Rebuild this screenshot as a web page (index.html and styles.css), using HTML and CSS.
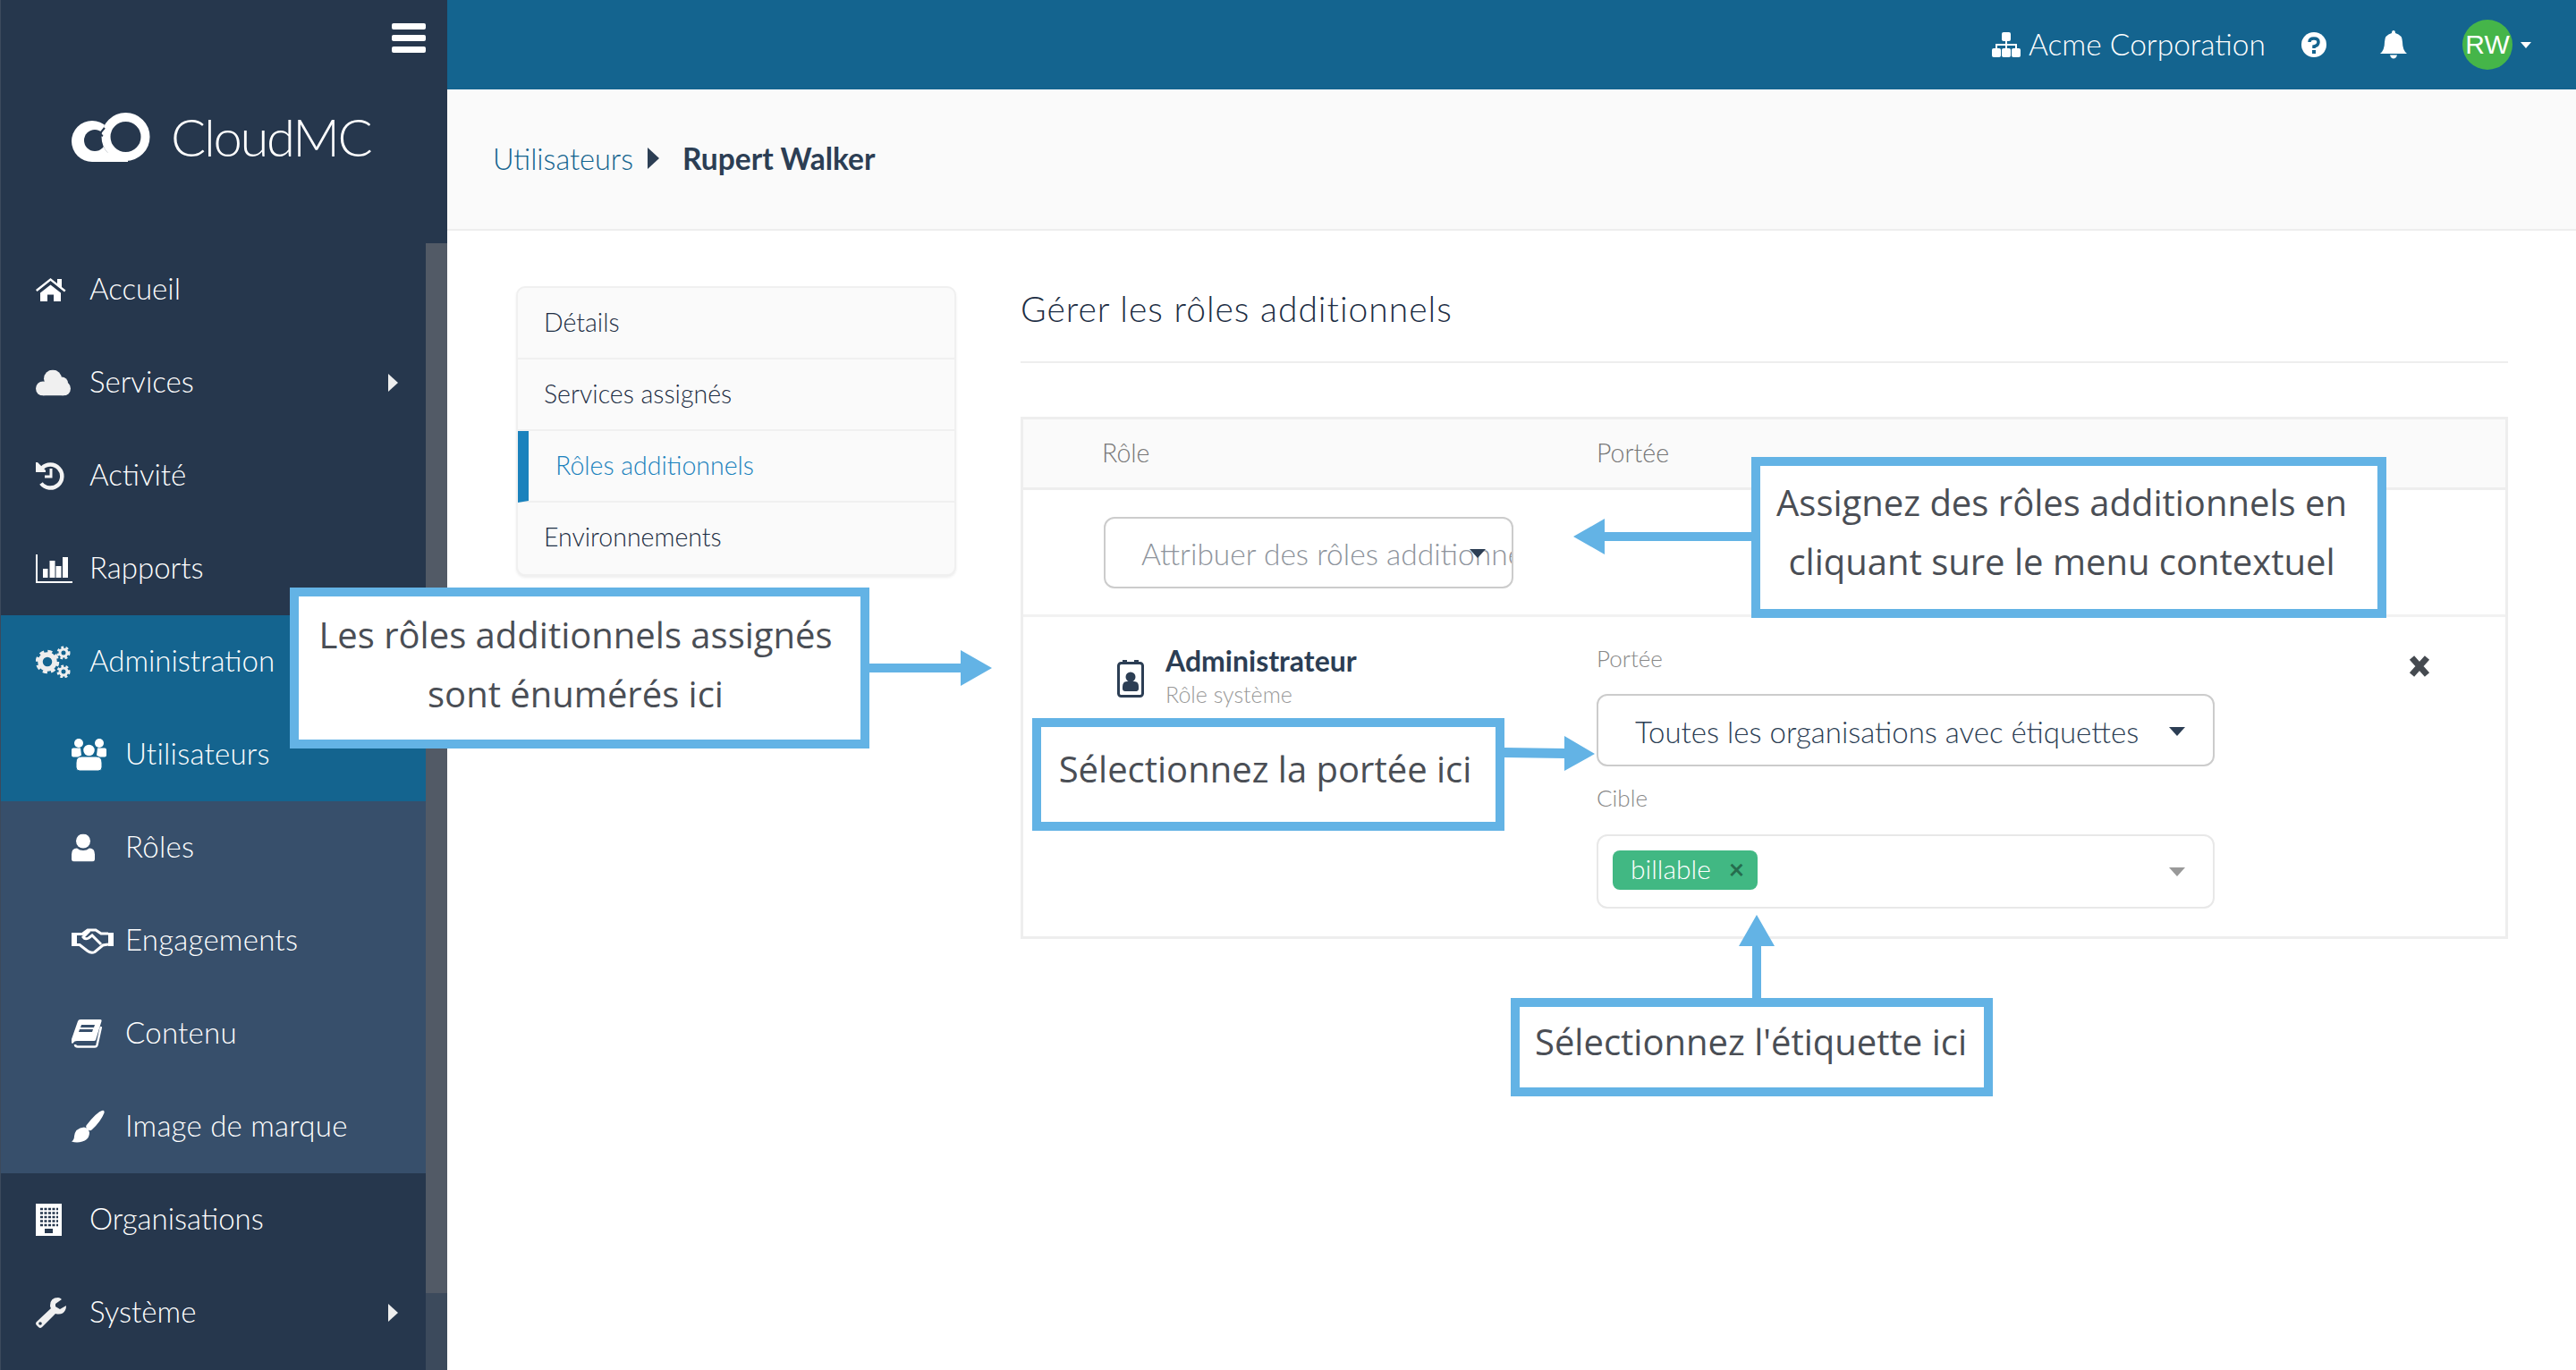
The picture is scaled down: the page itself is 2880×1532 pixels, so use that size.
FILE: index.html
```html
<!DOCTYPE html>
<html lang="fr">
<head>
    <meta charset="UTF-8">
    <title>CloudMC - Rôles additionnels</title>
    <link rel="stylesheet" href="styles.css">
</head>
<body>
    <div class="app">
        <aside class="sidebar">
            <div class="sidebar-top">
                <div class="burger"><span></span><span></span><span></span></div>
                <div class="logo">
                    <svg class="logo-mark" width="88" height="56" viewBox="0 0 88 56">
                        <circle cx="23" cy="32" r="23" fill="#fff"/>
                        <rect x="23" y="40" width="40" height="15" fill="#fff"/>
                        <circle cx="26" cy="31" r="12" fill="#26374d"/>
                        <circle cx="60" cy="27" r="26.500" fill="#26374d"/>
                        <circle cx="60.500" cy="27" r="22" fill="none" stroke="#fff" stroke-width="10"/>
                        <path d="M37 17l-6 7 4 2" fill="none" stroke="#26374d" stroke-width="2"/>
                        <rect x="23" y="45" width="38" height="10" fill="#fff"/>
                    </svg>
                    <span class="logo-text">CloudMC</span>
                </div>
            </div>
            <nav class="nav">
                <a class="nav-item">
                    <svg class="nav-icon" width="34" height="27" viewBox="0 0 34 27"><path fill="#fff" d="M0 13.500L16.500 0.500 24 6.500V1.500h5v9l4.500 3.500-1.500 2L16.500 3.500 1.500 15.500z"/><path fill="#fff" d="M5 17L16.500 8 28 17v9.500h-8V19h-7v7.500H5z"/></svg>
                    <span>Accueil</span>
                </a>
                <a class="nav-item">
                    <svg class="nav-icon" width="39" height="29" viewBox="0 0 39 29"><g fill="#f0f0f0"><circle cx="19" cy="10" r="10"/><circle cx="29" cy="15" r="7"/><circle cx="8" cy="21" r="8"/><circle cx="31" cy="21" r="8"/><rect x="8" y="14" width="23" height="15"/></g></svg>
                    <span>Services</span>
                    <i class="nav-arrow"></i>
                </a>
                <a class="nav-item">
                    <svg class="nav-icon" width="32" height="32" viewBox="0 0 32 32"><path fill="none" stroke="#f4f4f4" stroke-width="4.500" d="M7 7.500A13 13 0 1 1 6 24.500"/><path fill="#f4f4f4" d="M0 1h2l9 9v2H0z"/><path fill="none" stroke="#f4f4f4" stroke-width="3" d="M17 8v9h-7"/></svg>
                    <span>Activité</span>
                </a>
                <a class="nav-item">
                    <svg class="nav-icon" width="41" height="32" viewBox="0 0 41 32"><path fill="none" stroke="#fff" stroke-width="2" d="M1 0v31h40"/><path fill="#fff" d="M8 16h5.500v10H8zM15.500 7h6v19h-6zM22.500 13h6v13h-6zM30 3h6v23h-6z"/></svg>
                    <span>Rapports</span>
                </a>
                <a class="nav-item nav-item-open">
                    <svg class="nav-icon" width="39" height="36" viewBox="0 0 39 36"><g fill="none" stroke="#eee"><circle cx="13" cy="18" r="8" stroke-width="5.500"/><circle cx="13" cy="18" r="11.500" stroke-width="3.500" stroke-dasharray="5 4.030"/><circle cx="31" cy="8" r="4" stroke-width="3"/><circle cx="31" cy="8" r="6" stroke-width="3" stroke-dasharray="2.700 2.300"/><circle cx="31" cy="29" r="4" stroke-width="3"/><circle cx="31" cy="29" r="6" stroke-width="3" stroke-dasharray="2.700 2.300"/></g></svg>
                    <span>Administration</span>
                </a>
                <a class="nav-item nav-sub nav-item-open">
                    <svg class="nav-icon" width="39" height="36" viewBox="0 0 39 36"><g fill="#fff"><circle cx="8" cy="5" r="5"/><circle cx="31" cy="5" r="5"/><path d="M0 12.500q0-2 2-2h8l1 8-3 2H2q-2 0-2-2zM39 12.500q0-2-2-2h-8l-1 8 3 2h6q2 0 2-2z"/><circle cx="19.500" cy="13" r="7" stroke="#14648f" stroke-width="1.500"/><path d="M5 27q0-7 6-7h17q6 0 6 7v5q0 4-4 4H9q-4 0-4-4z" stroke="#14648f" stroke-width="1"/></g></svg>
                    <span>Utilisateurs</span>
                </a>
                <a class="nav-item nav-sub">
                    <svg class="nav-icon" width="26" height="31" viewBox="0 0 26 31"><g fill="#fff"><circle cx="13" cy="8" r="8"/><path d="M0 23q0-7 6-7 3 2.500 7 2.500t7-2.500q6 0 6 7v5q0 3-3 3H3q-3 0-3-3z"/></g></svg>
                    <span>Rôles</span>
                </a>
                <a class="nav-item nav-sub">
                    <svg class="nav-icon" width="47" height="30" viewBox="0 0 47 30"><path fill="#fff" d="M0 6h6v15H0zM41 6h6v15h-6z"/><path fill="none" stroke="#fff" stroke-width="3" d="M6 7.500h6L18 3h9l6 4h8M6 19.500h3l9 7q4 3 8 1l9-7.500 6-1M20 4l-7 7q2 3 6 1l4-3 10 10"/></svg>
                    <span>Engagements</span>
                </a>
                <a class="nav-item nav-sub">
                    <svg class="nav-icon" width="34" height="32" viewBox="0 0 34 32"><path fill="#fff" d="M10 0h22q2 0 1.500 2L27 23q-.5 1-2 1H6q-3 0-4 2l-1 1q-2-1-1-5L7 2q.5-2 3-2z"/><path fill="#374f6b" d="M11 6h15l-1 3H10zM9 11h15l-1 3H8z"/><path fill="none" stroke="#fff" stroke-width="2.500" d="M4 28q0 2.500 3 2.500h19q2 0 2.500-2L33 8"/></svg>
                    <span>Contenu</span>
                </a>
                <a class="nav-item nav-sub">
                    <svg class="nav-icon" width="37" height="37" viewBox="0 0 37 37"><path fill="#fff" d="M35 0q2 0 1.500 3-4 10-14 19-2 2-5-1-2-2-1-4Q28 2 35 0zM14 19q5 1 6 6 0 8-8 10-6 2-12 0 3-2 3-6 1-9 11-10z"/></svg>
                    <span>Image de marque</span>
                </a>
                <a class="nav-item">
                    <svg class="nav-icon" width="29" height="36" viewBox="0 0 29 36"><rect width="29" height="36" fill="#fff"/><path fill="none" stroke="#26374d" stroke-width="2.600" stroke-dasharray="3 1.500" d="M5 6h20M5 10.500h20M5 15h20M5 19.500h20M5 24h20"/><rect x="10" y="28" width="9" height="5" fill="#26374d"/></svg>
                    <span>Organisations</span>
                </a>
                <a class="nav-item">
                    <svg class="nav-icon" width="34" height="34" viewBox="0 0 34 34"><path fill="#f0f0f0" d="M25 0q-9 0-9 9 0 2 1 3L1 27q-2 2 0 4l2 2q2 2 4 0l15-15q8 2 11-4 1-2 1-5l-7 4-5-3V7l7-5q-2-2-4-2z"/><circle cx="5" cy="29" r="1.800" fill="#26374d"/></svg>
                    <span>Système</span>
                    <i class="nav-arrow"></i>
                </a>
            </nav>
            <div class="scrollbar"></div>
        </aside>

        <div class="main">
            <header class="topbar">
                <div class="org">
                    <svg width="32" height="28" viewBox="0 0 32 28"><g fill="#fff"><rect x="11" y="0" width="10" height="10" rx="2"/><rect x="0" y="18" width="10" height="10" rx="2"/><rect x="11" y="18" width="10" height="10" rx="2"/><rect x="22" y="18" width="10" height="10" rx="2"/></g><path fill="none" stroke="#fff" stroke-width="2" d="M16 10v8M5 18v-4h22v4"/></svg>
                    <span>Acme Corporation</span>
                </div>
                <svg class="top-icon" width="28" height="28" viewBox="0 0 28 28"><circle cx="14" cy="14" r="14" fill="#fff"/><path fill="none" stroke="#14648f" stroke-width="3.500" d="M9 11q0-4 5-4t5 4-5 5v2"/><rect x="12" y="20" width="4" height="4" fill="#14648f"/></svg>
                <svg class="top-icon bell" width="30" height="32" viewBox="0 0 30 32"><path fill="#fff" d="M15 0q2 0 2 3 8 2 8 10 0 9 5 13H0q5-4 5-13 0-8 8-10 0-3 2-3zM11 27.500h8q-1 4-4 4t-4-4z"/></svg>
                <div class="avatar">RW</div>
                <i class="avatar-caret"></i>
            </header>

            <div class="crumbs">
                <a>Utilisateurs</a>
                <i class="crumb-arrow"></i>
                <strong>Rupert Walker</strong>
            </div>

            <div class="content">
                <ul class="side-tabs">
                    <li>Détails</li>
                    <li>Services assignés</li>
                    <li class="active">Rôles additionnels</li>
                    <li>Environnements</li>
                </ul>

                <section class="panel">
                    <h2>Gérer les rôles additionnels</h2>
                    <div class="roles">
                        <div class="roles-head">
                            <span>Rôle</span>
                            <span>Portée</span>
                        </div>
                        <div class="roles-add">
                            <div class="add-select">
                                <span>Attribuer des rôles additionnels</span>
                                <i class="caret"></i>
                            </div>
                        </div>
                        <div class="role-row">
                            <div class="role-name">
                                <svg width="30" height="42" viewBox="0 0 30 42"><rect x="1.500" y="3.500" width="27" height="37" rx="3" fill="none" stroke="#2c3e54" stroke-width="3"/><path fill="#2c3e54" d="M6 0h5v4H6zM19 0h5v4h-5z"/><circle cx="15" cy="19" r="5.500" fill="#2c3e54"/><path fill="#2c3e54" d="M6 30q0-6 5-6h8q5 0 5 6v2q0 3-3 3H9q-3 0-3-3z"/></svg>
                                <div>
                                    <div class="role-title">Administrateur</div>
                                    <div class="role-sub">Rôle système</div>
                                </div>
                            </div>
                            <div class="role-fields">
                                <label>Portée</label>
                                <div class="scope-select">
                                    <span>Toutes les organisations avec étiquettes</span>
                                    <i class="caret"></i>
                                </div>
                                <label class="target-label">Cible</label>
                                <div class="target-select">
                                    <span class="tag">billable<b>×</b></span>
                                    <i class="caret caret-grey"></i>
                                </div>
                            </div>
                            <svg class="remove" width="24" height="26" viewBox="0 0 24 26"><path fill="none" stroke="#454a50" stroke-width="7" d="M3.500 3.500l17 19M20.500 3.500l-17 19"/></svg>
                        </div>
                    </div>
                </section>
            </div>
        </div>
    </div>

    <svg class="arrows" width="2880" height="1532" viewBox="0 0 2880 1532">
        <path d="M972 742h102v-15l35 20-35 20v-15H972z"/>
        <path d="M1958 595h-164v-15l-35 20 35 20v-15h164z"/>
        <path d="M1682 836l67 1v-14l34 20-34 19v-14l-67-1z"/>
        <path d="M1959 1116v-58h-15l20-35 20 35h-15v58z"/>
    </svg>

    <div class="callout callout-listed">Les rôles additionnels assignés<br>sont énumérés ici</div>
    <div class="callout callout-assign">Assignez des rôles additionnels en<br>cliquant sure le menu contextuel</div>
    <div class="callout callout-scope">Sélectionnez la portée ici</div>
    <div class="callout callout-tag">Sélectionnez l'étiquette ici</div>
</body>
</html>
```

FILE: styles.css
```css
* {
    margin: 0;
    padding: 0;
    box-sizing: border-box;
}

body {
    margin: 0;
    width: 2880px;
    height: 1532px;
    overflow: hidden;
    position: relative;
    background-color: white;
    font-family: Lato, "Open Sans", sans-serif;
    color: #2c3e54;
}

.app {
    display: flex;
    height: 100%;
}

/* sidebar */
.sidebar {
    position: relative;
    flex: 0 0 500px;
    background-color: #26374d;
    border-left: 1px solid #3c4a5c;
    color: white;
}

.sidebar-top {
    height: 272px;
    position: relative;
}

.burger {
    position: absolute;
    top: 26px;
    right: 24px;
    width: 38px;
    display: flex;
    flex-direction: column;
    gap: 6px;
}

.burger span {
    height: 7px;
    border-radius: 2px;
    background-color: white;
}

.logo {
    display: flex;
    align-items: center;
    gap: 23px;
    padding: 126px 0 0 79px;
}

.logo-text {
    font-size: 58px;
    line-height: 54px;
    font-weight: 300;
    letter-spacing: -2.300px;
    padding-bottom: 2px;
}

.nav {
    width: 475px;
}

.nav-item {
    height: 104px;
    display: flex;
    align-items: center;
    position: relative;
    padding-left: 99px;
    padding-bottom: 5px;
    font-size: 33px;
    font-weight: 300;
}

.nav-icon {
    position: absolute;
    left: 39px;
    top: 50%;
    transform: translateY(-50%);
}

.nav-sub {
    background-color: #374f6b;
    padding-left: 139px;
    letter-spacing: 0.250px;
}

.nav-sub .nav-icon {
    left: 79px;
}

.nav-item-open {
    background-color: #14648f;
}

.nav-arrow {
    position: absolute;
    left: 433px;
    top: 50%;
    margin-top: -10px;
    border-left: 11px solid #eee;
    border-top: 10px solid transparent;
    border-bottom: 10px solid transparent;
}

.scrollbar {
    position: absolute;
    top: 272px;
    right: 0;
    width: 24px;
    bottom: 0;
    background: linear-gradient(#525a66 1174px, #3c4a5c 1174px);
}

/* top bar */
.main {
    flex: 1;
    display: flex;
    flex-direction: column;
}

.topbar {
    height: 100px;
    flex: none;
    background-color: #14648f;
    color: white;
    display: flex;
    align-items: center;
    justify-content: flex-end;
    padding-right: 50px;
}

.org {
    display: flex;
    align-items: center;
    gap: 9px;
    font-size: 33.500px;
    font-weight: 300;
    margin-right: 40px;
}

.org span {
    padding-bottom: 3px;
}

.top-icon {
    flex: none;
}

.bell {
    margin-left: 60px;
    margin-right: 62px;
}

.avatar {
    width: 56px;
    height: 56px;
    border-radius: 50%;
    background-color: #45b549;
    font-family: "Liberation Sans", sans-serif;
    font-size: 30px;
    line-height: 56px;
    text-align: center;
}

.avatar-caret {
    margin-left: 9px;
    border-top: 7px solid white;
    border-left: 6px solid transparent;
    border-right: 6px solid transparent;
}

/* breadcrumb */
.crumbs {
    height: 158px;
    flex: none;
    background-color: #fafafa;
    border-bottom: 2px solid #eee;
    display: flex;
    align-items: center;
    padding-left: 51px;
    padding-bottom: 2px;
    font-size: 32.500px;
}

.crumbs a {
    color: #14648f;
    font-weight: 300;
}

.crumb-arrow {
    margin: 0 26px 0 16px;
    border-left: 13px solid #2c3e54;
    border-top: 12px solid transparent;
    border-bottom: 12px solid transparent;
}

.crumbs strong {
    font-size: 33.500px;
    font-weight: 700;
}

/* content */
.content {
    flex: 1;
    display: flex;
    align-items: flex-start;
    gap: 72px;
    padding: 62px 76px 0 77px;
}

.side-tabs {
    flex: 0 0 492px;
    list-style: none;
    background-color: #fafafa;
    border: 2px solid #f0f0f0;
    border-radius: 10px;
    box-shadow: 0 2px 3px #eee;
    font-size: 28.500px;
    font-weight: 300;
    color: #1d2e44;
}

.side-tabs li {
    height: 80px;
    line-height: 77px;
    padding-left: 29px;
    border-bottom: 2px solid #f0f0f0;
}

.side-tabs li:last-child {
    border-bottom: none;
}

.side-tabs .active {
    border-left: 12px solid #1a82bd;
    color: #1a82bd;
    padding-left: 30px;
}

.panel {
    flex: 1;
    margin-top: -2px;
}

.panel h2 {
    font-size: 39px;
    font-weight: 300;
    letter-spacing: 1px;
    line-height: 54px;
    padding-bottom: 32px;
    margin-bottom: 60px;
    border-bottom: 2px solid #eee;
    color: #1d2e44;
}

.roles {
    border: 3px solid #eee;
}

.roles-head {
    height: 79px;
    background-color: #fafafa;
    border-bottom: 3px solid #eee;
    display: flex;
    align-items: center;
    padding-left: 88px;
    padding-bottom: 2px;
    font-size: 28.500px;
    font-weight: 300;
    color: #777;
}

.roles-head span:first-child {
    flex: 0 0 553px;
}

.roles-add {
    height: 142px;
    border-bottom: 3px solid #f2f2f2;
    padding: 30px 0 0 90px;
}

.add-select {
    position: relative;
    width: 458px;
    height: 80px;
    border: 2px solid #ccc;
    border-radius: 12px;
    overflow: hidden;
    white-space: nowrap;
    line-height: 78px;
    padding-left: 40px;
    font-size: 33.500px;
    font-weight: 300;
    color: #8e949c;
}

.add-select .caret {
    position: absolute;
    left: 407px;
    top: 34px;
}

.caret {
    border-top: 10px solid #2c3e54;
    border-left: 9px solid transparent;
    border-right: 9px solid transparent;
}

.caret-grey {
    border-top-color: #999;
}

.role-row {
    position: relative;
    display: flex;
    height: 357px;
    padding: 28px 0 0 105px;
}

.role-name {
    flex: 0 0 536px;
    display: flex;
    align-items: flex-start;
    gap: 24px;
}

.role-name svg {
    margin-top: 20px;
}

.role-title {
    font-size: 32px;
    font-weight: 700;
    line-height: 38px;
    padding-top: 2px;
}

.role-sub {
    font-size: 25px;
    line-height: 36px;
    color: #999;
    font-weight: 300;
}

.role-fields {
    width: 691px;
}

.role-fields label {
    display: block;
    font-size: 26px;
    line-height: 36px;
    color: #888;
    font-weight: 300;
}

.scope-select,
.target-select {
    display: flex;
    align-items: center;
    justify-content: space-between;
    border-radius: 12px;
}

.scope-select {
    height: 81px;
    margin-top: 22px;
    padding: 2px 31px 0 41px;
    border: 2px solid #ccc;
    font-size: 33px;
    font-weight: 300;
}

.role-fields .target-label {
    margin-top: 17px;
}

.target-select {
    height: 83px;
    margin-top: 23px;
    padding: 0 31px 0 16px;
    border: 2px solid #e8e8e8;
}

.tag {
    display: flex;
    align-items: center;
    height: 44px;
    margin-top: -4px;
    padding: 0 15px 3px 20px;
    border-radius: 8px;
    background-color: #41b883;
    color: white;
    font-size: 30px;
    font-weight: 300;
}

.tag b {
    margin-left: 20px;
    color: #266d4e;
    font-weight: 700;
}

.remove {
    position: absolute;
    left: 1549px;
    top: 42px;
}

/* annotations */
.arrows {
    position: absolute;
    left: 0;
    top: 0;
    fill: #63b3e5;
}

.callout {
    position: absolute;
    border: 10px solid #63b3e5;
    background-color: white;
    font-family: "Open Sans", sans-serif;
    font-size: 40px;
    line-height: 66px;
    color: #4a4e55;
    text-align: center;
    white-space: nowrap;
}

.callout-listed {
    left: 324px;
    top: 657px;
    width: 648px;
    height: 180px;
    padding: 10px 9px 0 0;
}

.callout-assign {
    left: 1958px;
    top: 511px;
    width: 710px;
    height: 180px;
    padding: 8px 16px 0 0;
}

.callout-scope {
    left: 1154px;
    top: 803px;
    width: 528px;
    height: 126px;
    padding: 14px 7px 0 0;
}

.callout-tag {
    left: 1689px;
    top: 1116px;
    width: 539px;
    height: 110px;
    padding: 6px 2px 0 0;
}
```
